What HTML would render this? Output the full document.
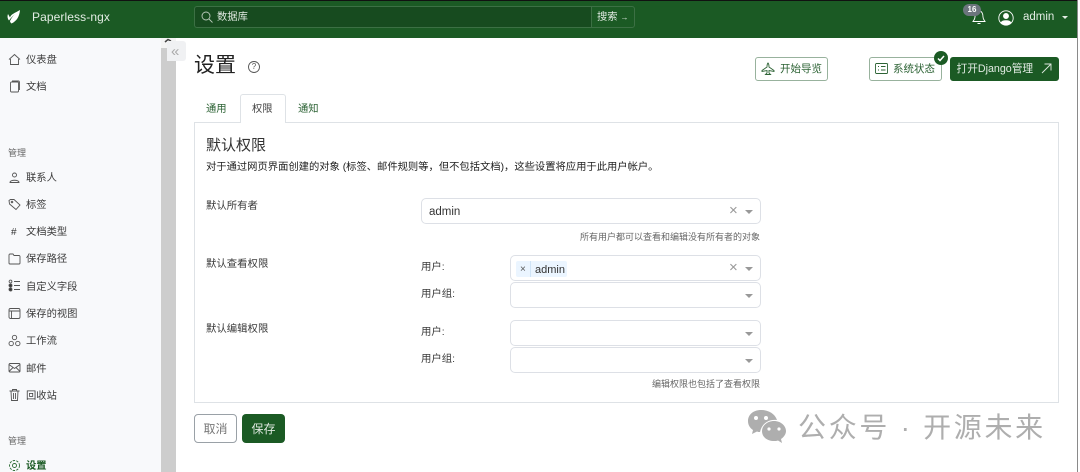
<!DOCTYPE html>
<html lang="zh"><head><meta charset="utf-8"><title>Paperless-ngx</title>
<style>
html,body{margin:0;padding:0;width:1080px;height:472px;overflow:hidden;background:#fff}
body{position:relative;font-family:"Liberation Sans","Noto Sans CJK SC",sans-serif;font-size:10.3px;color:#222;filter:blur(.3px)}
.a{position:absolute;white-space:nowrap;line-height:14px}
.b{position:absolute;box-sizing:border-box}
.nav{font-size:10.3px;color:#3a3a3a}
.sel{position:absolute;box-sizing:border-box;background:#fff;border:1px solid #dde0e6;border-radius:5px;height:26px;left:510px;width:251px}
.sel i{position:absolute;right:7px;top:11px;width:0;height:0;border-left:4px solid transparent;border-right:4px solid transparent;border-top:4px solid #999}
.x{position:absolute;left:729px;font-size:15px;line-height:14px;color:#999}
svg{position:absolute;fill:none;stroke:#555;stroke-width:.9}
.lab{font-size:10.4px;color:#3a3a3a}
.hint{font-size:9px;color:#666}
.btn{position:absolute;box-sizing:border-box;border:1px solid #98b29d;border-radius:3px;background:#fff;color:#2d6335;height:24px;line-height:23px;font-size:10.5px}
</style></head><body>
<div class="b" style="left:0;top:0;width:1080px;height:1px;background:#111"></div>
<div class="b" style="left:0;top:1px;width:1080px;height:37px;background:#1b5a24"></div>
<svg style="left:7px;top:9px;fill:#fff;stroke:none" width="14" height="16" viewBox="0 0 14 16"><path d="M13 1C12.500 7 10 12 4.500 14.500C3.500 13.500 3 13 3 12C4.500 9 6 7 8 5C6 7 3.500 9 2 11.500C0 9 .5 6.500 1 5L3 8.500C4 5 8 4 13 1Z"/></svg>
<div class="a" style="left:32px;top:10px;font-size:12px;color:#e3ece4;letter-spacing:.1px">Paperless-ngx</div>
<div class="b" style="left:194px;top:6px;width:398px;height:22px;background:#174b1f;border:1px solid #3c7044;border-right:0;border-radius:3px 0 0 3px"></div>
<div class="b" style="left:591px;top:6px;width:44px;height:22px;border:1px solid #3c7044;border-radius:0 3px 3px 0"></div>
<svg style="left:201px;top:11px;stroke:#b9c9bb" width="12" height="12" viewBox="0 0 12 12"><circle cx="5" cy="5" r="4"/><path d="M8 8l3.500 3.500"/></svg>
<div class="a" style="left:217px;top:11px;color:#dfe8e0">数据库</div>
<div class="a" style="left:597px;top:11px;color:#dfe8e0">搜索 <span style="font-size:8px">→</span></div>
<svg style="left:972px;top:9px;stroke:#fff" width="14" height="17" viewBox="0 0 14 17"><path d="M7 2C4 2 3 5 3 8C3 10 2 11 1 12.500H13C12 11 11 10 11 8C11 5 10 2 7 2ZM5.500 14.500H8.500"/></svg>
<div class="a" style="left:963px;top:4px;width:18px;height:12px;background:#6c757d;border-radius:6px;color:#fff;font-size:8px;line-height:12px;text-align:center;font-weight:bold">16</div>
<svg style="left:998px;top:10px;stroke:#fff" width="16" height="16" viewBox="0 0 16 16"><circle cx="8" cy="8" r="7.200"/><circle cx="8" cy="6" r="2.500" fill="#fff"/><path d="M3 13C4 10 12 10 13 13L8 15Z" fill="#fff"/></svg>
<div class="a" style="left:1023px;top:10px;font-size:11.500px;color:#e3ece4">admin</div>
<div class="b" style="left:1062px;top:16px;border-left:3px solid transparent;border-right:3px solid transparent;border-top:3px solid #e3ece4"></div>

<div class="b" style="left:0;top:38px;width:161px;height:434px;background:#f8f9fb"></div>
<div class="b" style="left:161px;top:38px;width:15px;height:434px;background:#cdcdcd"></div>
<div class="b" style="left:161px;top:38px;width:15px;height:10px;background:#f4f4f4"></div>
<svg style="left:164px;top:38px;stroke:#444;stroke-width:1.500" width="8" height="5" viewBox="0 0 8 5"><path d="M1 4L4 1.500L7 3"/></svg>
<div class="b" style="left:167px;top:41px;width:19px;height:20px;background:#f0f1f3;border-radius:0 3px 3px 0"></div>
<div class="a" style="left:171px;top:45px;font-size:15px;color:#aaa">«</div>

<svg style="left:8px;top:53px" width="13" height="13" viewBox="0 0 13 13"><path d="M1 6.500L6.500 1.500L12 6.500M2.500 6V11.500H10.500V6"/></svg>
<div class="a nav" style="left:26px;top:54px">仪表盘</div>
<svg style="left:9px;top:80px" width="12" height="13" viewBox="0 0 12 13"><rect x="1.500" y="2" width="8" height="10" rx="1"/><path d="M3 1H9.500C10.500 1 10.500 2 10.500 3V10"/></svg>
<div class="a nav" style="left:26px;top:81px">文档</div>
<div class="a" style="left:8px;top:146px;font-size:9px;color:#666">管理</div>
<svg style="left:8px;top:171px" width="13" height="13" viewBox="0 0 13 13"><circle cx="6.500" cy="4" r="2"/><path d="M2 11.500C2 8.500 11 8.500 11 11.500Z"/></svg>
<div class="a nav" style="left:26px;top:172px">联系人</div>
<svg style="left:8px;top:198px" width="13" height="13" viewBox="0 0 13 13"><path d="M1 2.500L2.500 1.500H6L12 7L8 11.500L1.500 6Z"/><circle cx="4" cy="4" r=".8"/></svg>
<div class="a nav" style="left:26px;top:199px">标签</div>
<div class="a" style="left:11px;top:226px;font-size:10px;color:#333">#</div>
<div class="a nav" style="left:26px;top:226px">文档类型</div>
<svg style="left:8px;top:252px" width="13" height="13" viewBox="0 0 13 13"><path d="M1 3V11C1 11.500 1.500 12 2 12H11C11.500 12 12 11.500 12 11V4.500C12 4 11.500 3.500 11 3.500H6L5 2H2C1.500 2 1 2.500 1 3Z"/></svg>
<div class="a nav" style="left:26px;top:253px">保存路径</div>
<svg style="left:8px;top:279px" width="13" height="13" viewBox="0 0 13 13"><circle cx="2.500" cy="2.500" r="1.400"/><circle cx="2.500" cy="6.500" r="1.500" fill="#333"/><circle cx="2.500" cy="10.500" r="1.500" fill="#333"/><path d="M6 2.500H12M6 6.500H12M6 10.500H12"/></svg>
<div class="a nav" style="left:26px;top:281px">自定义字段</div>
<svg style="left:8px;top:307px" width="13" height="13" viewBox="0 0 13 13"><rect x="1" y="1.500" width="11" height="10" rx="1.500"/><path d="M1 4H12M3.500 4V11.500"/></svg>
<div class="a nav" style="left:26px;top:308px">保存的视图</div>
<svg style="left:8px;top:334px" width="13" height="13" viewBox="0 0 13 13"><circle cx="6.500" cy="3.500" r="2.200"/><circle cx="3.200" cy="9.500" r="2.200"/><circle cx="9.800" cy="9.500" r="2.200"/></svg>
<div class="a nav" style="left:26px;top:335px">工作流</div>
<svg style="left:8px;top:361px" width="13" height="13" viewBox="0 0 13 13"><rect x="1" y="2.500" width="11" height="8.500" rx="1"/><path d="M1 3.500L6.500 7.500L12 3.500M1 10.500L5 6.500M12 10.500L8 6.500"/></svg>
<div class="a nav" style="left:26px;top:363px">邮件</div>
<svg style="left:8px;top:388px" width="13" height="14" viewBox="0 0 13 14"><path d="M1.500 3H11.500M4.500 3V1.500H8.500V3M3 3L3.500 12.500H9.500L10 3M5.500 5V11M7.500 5V11"/></svg>
<div class="a nav" style="left:26px;top:390px">回收站</div>
<div class="a" style="left:8px;top:434px;font-size:9px;color:#666">管理</div>
<svg style="left:8px;top:459px;stroke:#2d6b35" width="13" height="13" viewBox="0 0 13 13"><circle cx="6.500" cy="6.500" r="2"/><circle cx="6.500" cy="6.500" r="5" stroke-dasharray="2.400 1.200"/></svg>
<div class="a" style="left:26px;top:460px;font-weight:bold;color:#1b5a24">设置</div>

<div class="a" style="left:194px;top:53px;font-size:21px;line-height:26px;color:#222">设置</div>
<svg style="left:248px;top:61px;stroke:#555" width="12" height="12" viewBox="0 0 12 12"><circle cx="6" cy="6" r="5.500"/></svg>
<div class="a" style="left:248px;top:60px;width:12px;text-align:center;font-size:8px;color:#555">?</div>

<div class="btn" style="left:755px;top:57px;width:73px;padding-left:24px">开始导览</div>
<svg style="left:761px;top:62px;stroke:#2d6335" width="14" height="14" viewBox="0 0 14 14"><path d="M7 1C6 2 6 4 6 5L1 8.500V9.500L6 8.500V11L4.500 12.500H9.500L8 11V8.500L13 9.500V8.500L8 5C8 4 8 2 7 1Z"/></svg>
<div class="btn" style="left:869px;top:57px;width:73px;padding-left:23px">系统状态</div>
<svg style="left:875px;top:63px;stroke:#2d6335" width="13" height="11" viewBox="0 0 13 11"><rect x=".5" y=".5" width="12" height="10" rx="1"/><path d="M3 3.500H4M3 7H4M6 3.500H10.500M6 7H10.500"/></svg>
<div class="b" style="left:934px;top:51px;width:14px;height:14px;border-radius:50%;background:#1b5a24"></div>
<svg style="left:937px;top:55px;stroke:#fff;stroke-width:1.500" width="8" height="7" viewBox="0 0 8 7"><path d="M1 3.500L3 5.500L7 1"/></svg>
<div class="btn" style="left:950px;top:57px;width:109px;background:#1b5a24;border-color:#1b5a24;color:#e3ece4;padding-left:5.500px;font-size:10.700px">打开Django管理</div>
<svg style="left:1041px;top:63px;stroke:#dfe8e0" width="11" height="11" viewBox="0 0 11 11"><path d="M1 10L10 1M3.500 1H10V7.500"/></svg>

<div class="b" style="left:194px;top:122px;width:865px;height:281px;border:1px solid #dee2e6"></div>
<div class="b" style="left:240px;top:94px;width:46px;height:29px;background:#fff;border:1px solid #dee2e6;border-bottom:0;border-radius:3px 3px 0 0"></div>
<div class="a" style="left:206px;top:103px;color:#2d6335">通用</div>
<div class="a" style="left:252px;top:103px;color:#444">权限</div>
<div class="a" style="left:298px;top:103px;color:#2d6335">通知</div>

<div class="a" style="left:206px;top:137px;font-size:15px;line-height:18px;color:#333">默认权限</div>
<div class="a" style="left:206px;top:161px;font-size:10.300px;color:#222">对于通过网页界面创建的对象 (标签、邮件规则等，但不包括文档)，这些设置将应用于此用户帐户。</div>

<div class="a lab" style="left:206px;top:200px">默认所有者</div>
<div class="sel" style="left:421px;top:198px;width:340px"><i></i></div>
<div class="a" style="left:429px;top:205px;font-size:11.500px;color:#333">admin</div>
<div class="x" style="top:204px">×</div>
<div class="a hint" style="right:320px;top:230px">所有用户都可以查看和编辑没有所有者的对象</div>

<div class="a lab" style="left:206px;top:258px">默认查看权限</div>
<div class="a lab" style="left:421px;top:261px">用户:</div>
<div class="sel" style="top:255px"><i></i></div>
<div class="b" style="left:516px;top:261px;width:51px;height:16px;background:#ebf5ff;border-radius:2px"></div>
<div class="b" style="left:530px;top:261px;width:1px;height:16px;background:#cfe4f7"></div>
<div class="a" style="left:520px;top:263px;font-size:10px;color:#555">×</div>
<div class="a" style="left:535px;top:263px;font-size:11px;color:#333">admin</div>
<div class="x" style="top:261px">×</div>
<div class="a lab" style="left:421px;top:288px">用户组:</div>
<div class="sel" style="top:282px"><i></i></div>

<div class="a lab" style="left:206px;top:323px">默认编辑权限</div>
<div class="a lab" style="left:421px;top:326px">用户:</div>
<div class="sel" style="top:320px"><i></i></div>
<div class="a lab" style="left:421px;top:353px">用户组:</div>
<div class="sel" style="top:347px"><i></i></div>
<div class="a hint" style="right:320px;top:377px">编辑权限也包括了查看权限</div>

<div class="b" style="left:194px;top:414px;width:43px;height:29px;border:1px solid #9aa1a7;border-radius:4px;text-align:center;line-height:28px;font-size:12px;color:#777">取消</div>
<div class="b" style="left:242px;top:414px;width:43px;height:29px;background:#1b5a24;border-radius:4px;text-align:center;line-height:30px;font-size:12px;color:#dfe8e0">保存</div>

<svg style="left:747px;top:409px;stroke:none;fill:#aeaeae" width="43" height="36" viewBox="0 0 43 36"><path d="M14 1C6 1 1 6 1 12C1 16 3 19 6 21L5 25L10 22.500C11 23 12 23 13 23C15 14 22 10 30 11C28 5 22 1 14 1Z"/><path d="M27 12C20 12 15 17 15 22C15 28 20 32 27 32C28 32 30 32 31 31.500L35 34L34 30C37 28 39 25 39 22C39 17 34 12 27 12Z"/><circle cx="9" cy="9" r="2" fill="#fff"/><circle cx="19" cy="9" r="2" fill="#fff"/><circle cx="22" cy="20" r="1.600" fill="#fff"/><circle cx="32" cy="20" r="1.600" fill="#fff"/></svg>
<div class="a" style="left:798px;top:411px;font-size:28px;line-height:34px;color:#aeaeae;letter-spacing:2.700px">公众号 · 开源未来</div>

<div class="b" style="left:1077px;top:0;width:1px;height:472px;background:#8a8a8a"></div>
<div class="b" style="left:1078px;top:0;width:2px;height:472px;background:#fff"></div>
</body></html>
